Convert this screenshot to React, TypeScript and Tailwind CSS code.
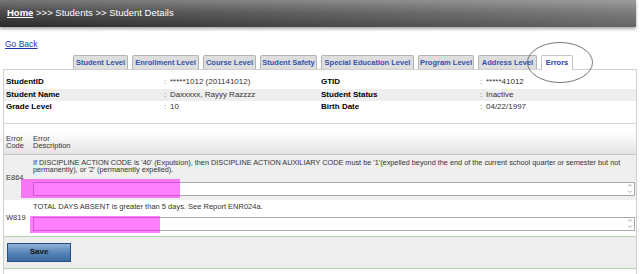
import React from 'react'

const TABS: [string, number][] = [
  ['Student Level', 55],
  ['Enrollment Level', 67],
  ['Course Level', 53],
  ['Student Safety', 57],
  ['Special Education Level', 93],
  ['Program Level', 56],
  ['Address Level', 59],
]

const INFO = [
  ['StudentID', '*****1012 (201141012)', 'GTID', '*****41012'],
  ['Student Name', 'Daxxxxx, Rayyy Razzzz', 'Student Status', 'Inactive'],
  ['Grade Level', '10', 'Birth Date', '04/22/1997'],
]

function Box() {
  return (
    <div className="h-[14px] border border-[#a9a9a9] bg-white flex justify-end items-center pr-[1px]">
      <svg width="6" height="11" viewBox="0 0 6 11" className="text-[#8a8a8a]">
        <path d="M1 3.5 L3 1.5 L5 3.5" fill="none" stroke="currentColor" strokeWidth="0.8" />
        <path d="M1 7.5 L3 9.5 L5 7.5" fill="none" stroke="currentColor" strokeWidth="0.8" />
      </svg>
    </div>
  )
}

export default function App() {
  return (
    <div className="relative w-[640px] h-[274px] overflow-hidden bg-white font-['Liberation_Sans',Arial,sans-serif] text-[#333]">
      {/* title bar */}
      <div className="h-[27px] w-[636px] flex items-center px-[7px] text-white text-[9.5px] bg-[linear-gradient(to_right,rgba(255,255,255,0),rgba(255,255,255,0.28)),linear-gradient(to_bottom,#767676,#4a4a4a_45%,#2a2a2a)] shadow-[0_2px_3px_rgba(0,0,0,0.35)]">
        <span className="font-bold underline">Home</span>
        <span>&nbsp;&gt;&gt;&gt; Students &gt;&gt; Student Details</span>
      </div>

      <div className="mt-[13px] ml-[5px] text-[8.5px] leading-[9px] text-[#1f35a8] underline">Go Back</div>

      {/* tabs */}
      <div className="mt-[6px] flex items-end gap-[4px] pl-[73px] h-[14px]">
        {TABS.map(([t, w]) => (
          <div key={t} style={{ width: w }} className="h-[14px] flex items-center justify-center rounded-t-[2px] border border-b-0 border-[#b4b4b4] bg-[#dedede] text-[7.5px] font-bold text-[#3353a8]">
            {t}
          </div>
        ))}
        <div className="w-[32px] h-[15px] mb-[-1px] flex items-center justify-center rounded-t-[2px] border border-b-0 border-[#c4c4c4] bg-white text-[7.5px] font-bold text-[#2440a8] relative z-10">
          Errors
        </div>
      </div>

      {/* panel */}
      <div className="ml-[3px] w-[634px] border-x border-t border-[#cfcfcf]">
        <div className="pt-[6px] pb-[9px]">
          {INFO.map((r, i) => (
            <div key={i} className={`flex h-[12.5px] items-center text-[8px] ${i === 1 ? 'bg-[#eeeeee]' : ''}`}>
              <div className="w-[160px] pl-[2px] font-bold text-black">{r[0]}</div>
              <div className="w-[157px]"><span className="inline-block w-[6px] text-[#777]">:</span>{r[1]}</div>
              <div className="w-[159px] font-bold text-black">{r[2]}</div>
              <div><span className="inline-block w-[6px] text-[#777]">:</span>{r[3]}</div>
            </div>
          ))}
        </div>

        {/* error table */}
        <div className="border-t border-[#d4d4d4] h-[32px] flex items-end pb-[4px] bg-[linear-gradient(to_bottom,#ffffff,#ffffff_25%,#e4e4e4)] border-b border-b-[#c4c4c4] text-[7.5px] text-[#333]">
          <div className="w-[29px] pl-[2px] leading-[7.5px]">Error<br />Code</div>
          <div className="leading-[7.5px]">Error<br />Description</div>
        </div>

        <div className="relative flex items-center bg-[#efefef] h-[45px] text-[7.5px]">
          <div className="w-[29px] pl-[2px] pt-[1px]">E864</div>
          <div className="flex-1 self-start pt-[4px] pr-[1px]">
            <div className="text-[7.3px] leading-[7.5px] mb-[8px]">
              If DISCIPLINE ACTION CODE is '40' (Expulsion), then DISCIPLINE ACTION AUXILIARY CODE must be '1'(expelled beyond the end of the current school quarter or semester but not permanently), or '2' (permanently expelled).
            </div>
            <Box />
          </div>
          <div className="absolute left-[17px] top-[24px] w-[159px] h-[19px] bg-[#ff00ff]/50" />
        </div>

        <div className="relative flex items-center bg-white h-[36px] text-[7.5px]">
          <div className="w-[29px] pl-[2px]">W819</div>
          <div className="flex-1 self-start pt-[3px] pr-[1px]">
            <div className="leading-[8px] mb-[6px]">TOTAL DAYS ABSENT is greater than 5 days. See Report ENR024a.</div>
            <Box />
          </div>
          <div className="absolute left-[26px] top-[16px] w-[130px] h-[17px] bg-[#ff00ff]/50" />
        </div>

        <div className="h-[33px] border-y border-[#b9d1ab] bg-[#eeeeee] pt-[6px] pl-[3px]">
          <div className="w-[64px] h-[19px] flex items-center justify-center border border-[#23507f] bg-[linear-gradient(to_bottom,#8eb0d6,#5582b6_55%,#3b6aa0)] text-[8px] font-bold text-[#111]">
            Save
          </div>
        </div>
        <div className="h-[6px]" />
      </div>

      {/* hand-drawn circle around the Errors tab */}
      <svg className="absolute left-[526px] top-[41px]" width="68" height="43" viewBox="0 0 68 43">
        <ellipse cx="34" cy="21.5" rx="32.5" ry="20" fill="none" stroke="#555" strokeWidth="0.8" />
      </svg>
    </div>
  )
}
